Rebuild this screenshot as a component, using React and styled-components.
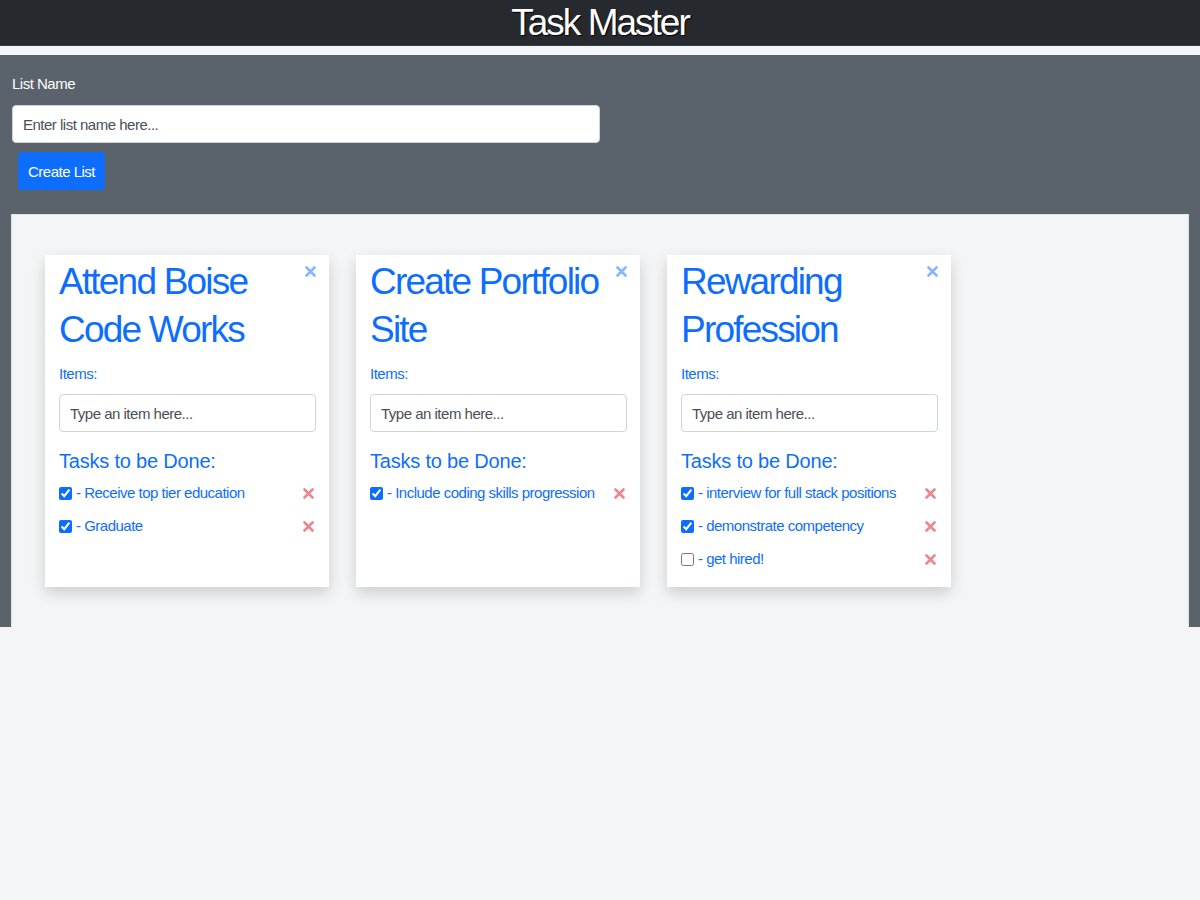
import React from "react";
import styled, { createGlobalStyle } from "styled-components";

const FONT = `"Liberation Sans", Arial, Helvetica, sans-serif`;

const Global = createGlobalStyle`
  html, body { margin: 0; padding: 0; }
  body {
    background: #f4f5f7;
    font-family: ${FONT};
    font-size: 15px;
    letter-spacing: -0.5px;
    line-height: 1.5;
    color: #212529;
  }
  * { box-sizing: border-box; }
`;

const Header = styled.header`
  height: 46px;
  background: #262a2f;
  border-bottom: 1px solid #3a3f45;
  display: flex;
  align-items: center;
  justify-content: center;
`;

const Title = styled.h1`
  margin: 0;
  font-size: 37px;
  line-height: 46px;
  letter-spacing: -2px;
  font-weight: 400;
  color: #fff;
  text-shadow: 1px 1px 1px #000;
`;

const Main = styled.main`
  margin-top: 9px;
  background: #5a626c;
  padding: 16px 11px 0;
  border-top: 1px solid #555d66;
`;

const Form = styled.form`
  display: flex;
  flex-direction: column;
  align-items: flex-start;
  padding-left: 1px;
`;

const Label = styled.label`
  color: #fff;
  font-size: 15px;
  line-height: 24px;
  margin-bottom: 9px;
`;

const ListInput = styled.input`
  width: 588px;
  height: 38px;
  border: 1px solid #ced4da;
  border-radius: 4px;
  padding: 0 10px;
  font-family: ${FONT};
  font-size: 15px;
  letter-spacing: -0.5px;
  color: #495057;
  background: #fff;
  outline: none;
  &::placeholder { color: #495057; }
`;

const Button = styled.button`
  margin: 9px 0 0 6px;
  height: 38px;
  padding: 0 10px;
  background: #0d6efd;
  color: #fff;
  border: none;
  border-radius: 4px;
  font-family: ${FONT};
  font-size: 15px;
  letter-spacing: -0.5px;
  cursor: pointer;
`;

const Board = styled.section`
  margin-top: 24px;
  background: #f4f5f7;
  border: 1px solid #dfe2e6;
  border-bottom: none;
  padding: 40px 33px 40px;
  display: flex;
  gap: 27px;
  align-items: stretch;
`;

const Card = styled.div`
  position: relative;
  width: 284px;
  background: #fff;
  padding: 3px 13px 16px 14px;
  box-shadow: 0 6px 14px rgba(0, 0, 0, 0.16);
  display: flex;
  flex-direction: column;
`;

const CardTitle = styled.h2`
  margin: 0 0 8px;
  font-size: 37px;
  line-height: 48px;
  letter-spacing: -1.8px;
  font-weight: 400;
  color: #0d6efd;
  padding-right: 12px;
`;

const CloseBtn = styled.button`
  position: absolute;
  top: 9px;
  right: 12px;
  width: 14px;
  height: 14px;
  padding: 0;
  border: none;
  background: none;
  display: flex;
  align-items: center;
  justify-content: center;
  cursor: pointer;
`;

const SmallLabel = styled.div`
  color: #0d6efd;
  font-size: 15px;
  line-height: 24px;
  margin-bottom: 8px;
`;

const ItemInput = styled.input`
  width: 100%;
  height: 38px;
  border: 1px solid #ced4da;
  border-radius: 4px;
  padding: 0 10px;
  font-family: ${FONT};
  font-size: 15px;
  letter-spacing: -0.5px;
  color: #495057;
  outline: none;
  &::placeholder { color: #495057; }
`;

const TasksHeading = styled.h5`
  margin: 17px 0 8px;
  font-size: 20px;
  line-height: 24px;
  letter-spacing: -0.2px;
  font-weight: 400;
  color: #0d6efd;
`;

const TaskList = styled.ul`
  list-style: none;
  margin: 0;
  padding: 0;
  display: flex;
  flex-direction: column;
  gap: 9px;
`;

const TaskRow = styled.li`
  display: flex;
  align-items: center;
  justify-content: space-between;
  height: 24px;
`;

const TaskLabel = styled.label`
  display: flex;
  align-items: center;
  gap: 4px;
  color: #0d6efd;
  font-size: 15px;
  line-height: 24px;
  white-space: nowrap;
`;

const Check = styled.input`
  margin: 0;
  width: 13px;
  height: 13px;
  accent-color: #0d6efd;
`;

const DeleteBtn = styled.button`
  width: 14px;
  height: 14px;
  padding: 0;
  margin-right: 1px;
  border: none;
  background: none;
  display: flex;
  align-items: center;
  justify-content: center;
  cursor: pointer;
`;

const XIcon = ({ color }) => (
  <svg width="11" height="11" viewBox="0 0 11 11">
    <path d="M1.5 1.5 L9.5 9.5 M9.5 1.5 L1.5 9.5" stroke={color} strokeWidth="2.6" strokeLinecap="round" />
  </svg>
);

const lists = [
  {
    title: "Attend Boise Code Works",
    tasks: [
      { text: "Receive top tier education", done: true },
      { text: "Graduate", done: true },
    ],
  },
  {
    title: "Create Portfolio Site",
    tasks: [{ text: "Include coding skills progression", done: true }],
  },
  {
    title: "Rewarding Profession",
    tasks: [
      { text: "interview for full stack positions", done: true },
      { text: "demonstrate competency", done: true },
      { text: "get hired!", done: false },
    ],
  },
];

export default function App() {
  return (
    <>
      <Global />
      <Header>
        <Title>Task Master</Title>
      </Header>
      <Main>
        <Form onSubmit={(e) => e.preventDefault()}>
          <Label htmlFor="listName">List Name</Label>
          <ListInput id="listName" placeholder="Enter list name here..." />
          <Button type="submit">Create List</Button>
        </Form>
        <Board>
          {lists.map((list) => (
            <Card key={list.title}>
              <CloseBtn aria-label="Delete list">
                <XIcon color="rgba(13,110,253,0.5)" />
              </CloseBtn>
              <CardTitle>{list.title}</CardTitle>
              <SmallLabel>Items:</SmallLabel>
              <ItemInput placeholder="Type an item here..." />
              <TasksHeading>Tasks to be Done:</TasksHeading>
              <TaskList>
                {list.tasks.map((t) => (
                  <TaskRow key={t.text}>
                    <TaskLabel>
                      <Check type="checkbox" defaultChecked={t.done} />
                      <span>- {t.text}</span>
                    </TaskLabel>
                    <DeleteBtn aria-label="Delete task">
                      <XIcon color="rgba(220,53,69,0.6)" />
                    </DeleteBtn>
                  </TaskRow>
                ))}
              </TaskList>
            </Card>
          ))}
        </Board>
      </Main>
    </>
  );
}
